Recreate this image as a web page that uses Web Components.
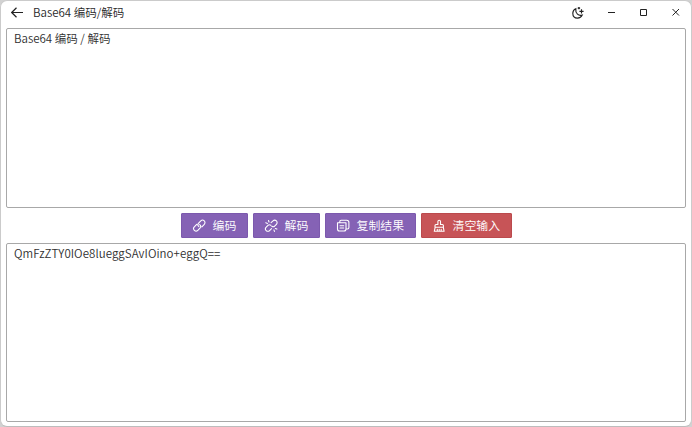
<!DOCTYPE html>
<html lang="zh-CN">
<head>
<meta charset="utf-8">
<title>Base64 编码/解码</title>
<style>
html, body { margin: 0; height: 100%; background: #d2d2d2; overflow: hidden; }
body { font: 350 11.5px/16px "Noto Sans CJK SC", "Noto Sans CJK SC DemiLight", sans-serif; color: #303030; }
</style>
</head>
<body>
<base64-window></base64-window>

<template id="t-window">
<style>
:host { display: flex; flex-direction: column; box-sizing: border-box; height: 427px; width: 692px; background: #fff; border: 1px solid #cbcbcb; border-bottom-color: #bdbdbd; border-radius: 7px; padding: 0 5px 4px 5px; }
nav { display: flex; justify-content: center; gap: 5px; padding: 5px 0; height: 25px; }
</style>
<title-bar>Base64 编码/解码</title-bar>
<text-pane>Base64 编码 / 解码</text-pane>
<nav>
<tool-button icon="link">编码</tool-button>
<tool-button icon="unlink">解码</tool-button>
<tool-button icon="copy" wide>复制结果</tool-button>
<tool-button icon="clear" wide danger>清空输入</tool-button>
</nav>
<text-pane style="--track: .06px">QmFzZTY0IOe8lueggSAvIOino+eggQ==</text-pane>
</template>

<template id="t-bar">
<style>
:host { display: flex; align-items: center; height: 27px; box-sizing: border-box; padding: 0 0 5px 5px; color: #282828; }
svg { display: block; fill: none; stroke: #222; stroke-width: 1; }
.title { flex: 1; margin-left: 10px; }
.controls { display: flex; gap: 16px; padding-right: 2px; }
.controls svg:first-child { margin-right: 2px; stroke-width: 1.15; }
</style>
<svg width="12" height="16" viewBox="0 0 12 16"><path d="M12 8.500H.7M5.500 3.800.7 8.500l4.800 4.700" stroke-width="1.200"/></svg>
<span class="title"><slot></slot></span>
<div class="controls">
<svg width="16" height="16" viewBox="0 0 16 16"><path d="M5.800 4.700C4 5.500 2.800 7.100 2.800 9.200c0 2.900 2 4.900 4.700 4.900 2.200 0 3.900-1.200 4.700-3-3.600 1.100-7-1.500-6.400-6.400zM11.500 5.300v4.200M9.400 7.400h4.200M8.900 2.900v2.400M7.700 4.100h2.400"/></svg>
<svg width="16" height="16" viewBox="0 0 16 16"><path d="M4 8.500h7"/></svg>
<svg width="16" height="16" viewBox="0 0 16 16"><path d="M4.500 5.500h6v6h-6z"/></svg>
<svg width="16" height="16" viewBox="0 0 16 16"><path d="m4.500 5 6.500 6.500m0-6.500-6.500 6.500"/></svg>
</div>
</template>

<template id="t-pane">
<style>
:host { flex: 1; display: block; box-sizing: border-box; border: 1px solid #a8a8a8; border-radius: 2px; padding: 1px 7px; letter-spacing: var(--track, 0); }
</style>
<slot></slot>
</template>

<template id="t-button">
<style>
:host { display: flex; align-items: center; box-sizing: border-box; width: 67px; height: 25px; padding-left: 10px; gap: 6px; background: #8562b5; border: 1px solid #7c59ad; border-radius: 1px; color: #fff; font-size: 11.9px; }
:host([wide]) { width: 91px; }
:host([danger]) { background: #c75457; border-color: #bb4a4d; }
svg { display: block; fill: none; stroke: #fff; stroke-width: 1.1; stroke-linecap: round; stroke-linejoin: round; }
</style>
<svg width="15" height="15" viewBox="0 0 15 15"><path></path></svg><span><slot></slot></span>
</template>

<script>
const stamp = (host, id) => {
  host.attachShadow({ mode: "open" }).append(document.getElementById(id).content.cloneNode(true));
};
const icons = {
  link: "M6.900 8.600A2.300 2.300 0 0 1 6.400 5.400L8.800 2.900A2.400 2.400 0 0 1 12.300 6.300L9.900 8.800M7.700 6.600A2.300 2.300 0 0 1 8.200 9.800L5.800 12.300A2.400 2.400 0 0 1 2.300 8.900L4.700 6.400",
  unlink: "M7.100 4.700 9 2.900A2.300 2.300 0 0 1 12.400 6.300L10.600 8.200Q9.300 9.200 7.800 8.200M7.500 10.700l-1.900 1.900A2.300 2.300 0 0 1 2.200 9.200L4 7.300Q5.300 6.300 6.800 7.300M4.500 2.500l.5 1.500M1.800 4.800l1.700.6M11.300 10.500l1.600.6M9.900 11.900l.6 1.500",
  copy: "M1.500 4.800h8.500v6.200q0 2-2 2H3.500q-2 0-2-2zM3.800 4.600V3.500q0-1.300 1.300-1.300h5.600q2.200 0 2.200 2.200v5.100q0 1.500-1.500 1.500h-1.200M4 7.700h3.700M4 10h3.700",
  clear: "M5.900 6.500V3.600a1.300 1.300 0 0 1 2.600 0v2.900h1.900q1 0 1 1v1.700H3V7.500q0-1 1-1zM3.200 9.200 2.300 13.300h9.800l-.8-4.100M5.300 13v-1.700M7.200 13v-1.700M9.200 13v-1.700"
};
customElements.define("text-pane", class extends HTMLElement {
  constructor() { super(); stamp(this, "t-pane"); }
});
customElements.define("title-bar", class extends HTMLElement {
  constructor() { super(); stamp(this, "t-bar"); }
});
customElements.define("tool-button", class extends HTMLElement {
  constructor() { super(); stamp(this, "t-button"); }
  connectedCallback() {
    this.shadowRoot.querySelector("path").setAttribute("d", icons[this.getAttribute("icon")]);
  }
});
customElements.define("base64-window", class extends HTMLElement {
  constructor() { super(); stamp(this, "t-window"); }
});
</script>
</body>
</html>
